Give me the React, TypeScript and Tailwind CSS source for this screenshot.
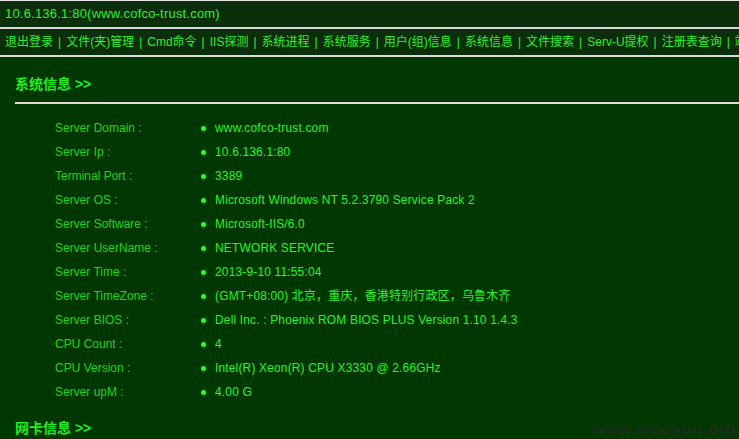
import React from "react";

const rows: [string, string][] = [
  ["Server Domain :", "www.cofco-trust.com"],
  ["Server Ip :", "10.6.136.1:80"],
  ["Terminal Port :", "3389"],
  ["Server OS :", "Microsoft Windows NT 5.2.3790 Service Pack 2"],
  ["Server Software :", "Microsoft-IIS/6.0"],
  ["Server UserName :", "NETWORK SERVICE"],
  ["Server Time :", "2013-9-10 11:55:04"],
  ["Server TimeZone :", "(GMT+08:00) 北京，重庆，香港特别行政区，乌鲁木齐"],
  ["Server BIOS :", "Dell Inc. : Phoenix ROM BIOS PLUS Version 1.10 1.4.3"],
  ["CPU Count :", "4"],
  ["CPU Version :", "Intel(R) Xeon(R) CPU X3330 @ 2.66GHz"],
  ["Server upM :", "4.00 G"],
];

const nav = [
  "退出登录",
  "文件(夹)管理",
  "Cmd命令",
  "IIS探测",
  "系统进程",
  "系统服务",
  "用户(组)信息",
  "系统信息",
  "文件搜索",
  "Serv-U提权",
  "注册表查询",
  "端口扫描",
];

export default function App() {
  return (
    <div
      className="relative w-[739px] h-[439px] overflow-hidden bg-[#013801] text-[12px]"
      style={{ fontFamily: '"Liberation Sans", "Noto Sans CJK SC", sans-serif' }}
    >
      <div className="border-t border-[#e6e6e6] bg-[#0b2e0b] h-[29px] border-b-2 border-b-[#d8d8d8] flex items-center pl-[5px] text-[13px] tracking-[0.2px] text-[#2cf02c]">
        10.6.136.1:80(www.cofco-trust.com)
      </div>
      <div className="bg-[#0b2e0b] h-[28px] border-b-2 border-b-[#d8d8d8] flex items-center pl-[5px] whitespace-nowrap overflow-hidden text-[#2cf02c]">
        {nav.map((n, i) => (
          <span key={n}>
            {i > 0 && <span className="px-[5px]">|</span>}
            {n}
          </span>
        ))}
      </div>
      <div className="pl-[15px]">
        <div className="mt-[17px] h-[20px] leading-[20px] text-[14px] font-bold text-[#22ee22]">
          系统信息 &gt;&gt;
        </div>
        <div className="mt-[8px] h-[2px] bg-[#dcdcdc]" />
        <div className="mt-[12px] pl-[40px]">
          {rows.map(([k, v]) => (
            <div key={k} className="flex h-[24px] items-center">
              <div className="w-[146px] text-[#1fd41f]">{k}</div>
              <div className="w-[14px] flex items-center">
                <span className="w-[5px] h-[5px] rounded-full bg-[#22ff22]" />
              </div>
              <div className="text-[#2af22a] whitespace-nowrap tracking-[0.15px]">{v}</div>
            </div>
          ))}
        </div>
        <div className="mt-[14px] h-[20px] leading-[20px] text-[14px] font-bold text-[#22ee22]">
          网卡信息 &gt;&gt;
        </div>
      </div>
      <div
        className="absolute right-[3px] bottom-[0px] leading-[20px] text-[17px] font-bold text-[#1d2e1d] tracking-[0.3px]"
        style={{ fontFamily: '"Liberation Sans", sans-serif' }}
      >
        www.wooyun.org
      </div>
    </div>
  );
}
